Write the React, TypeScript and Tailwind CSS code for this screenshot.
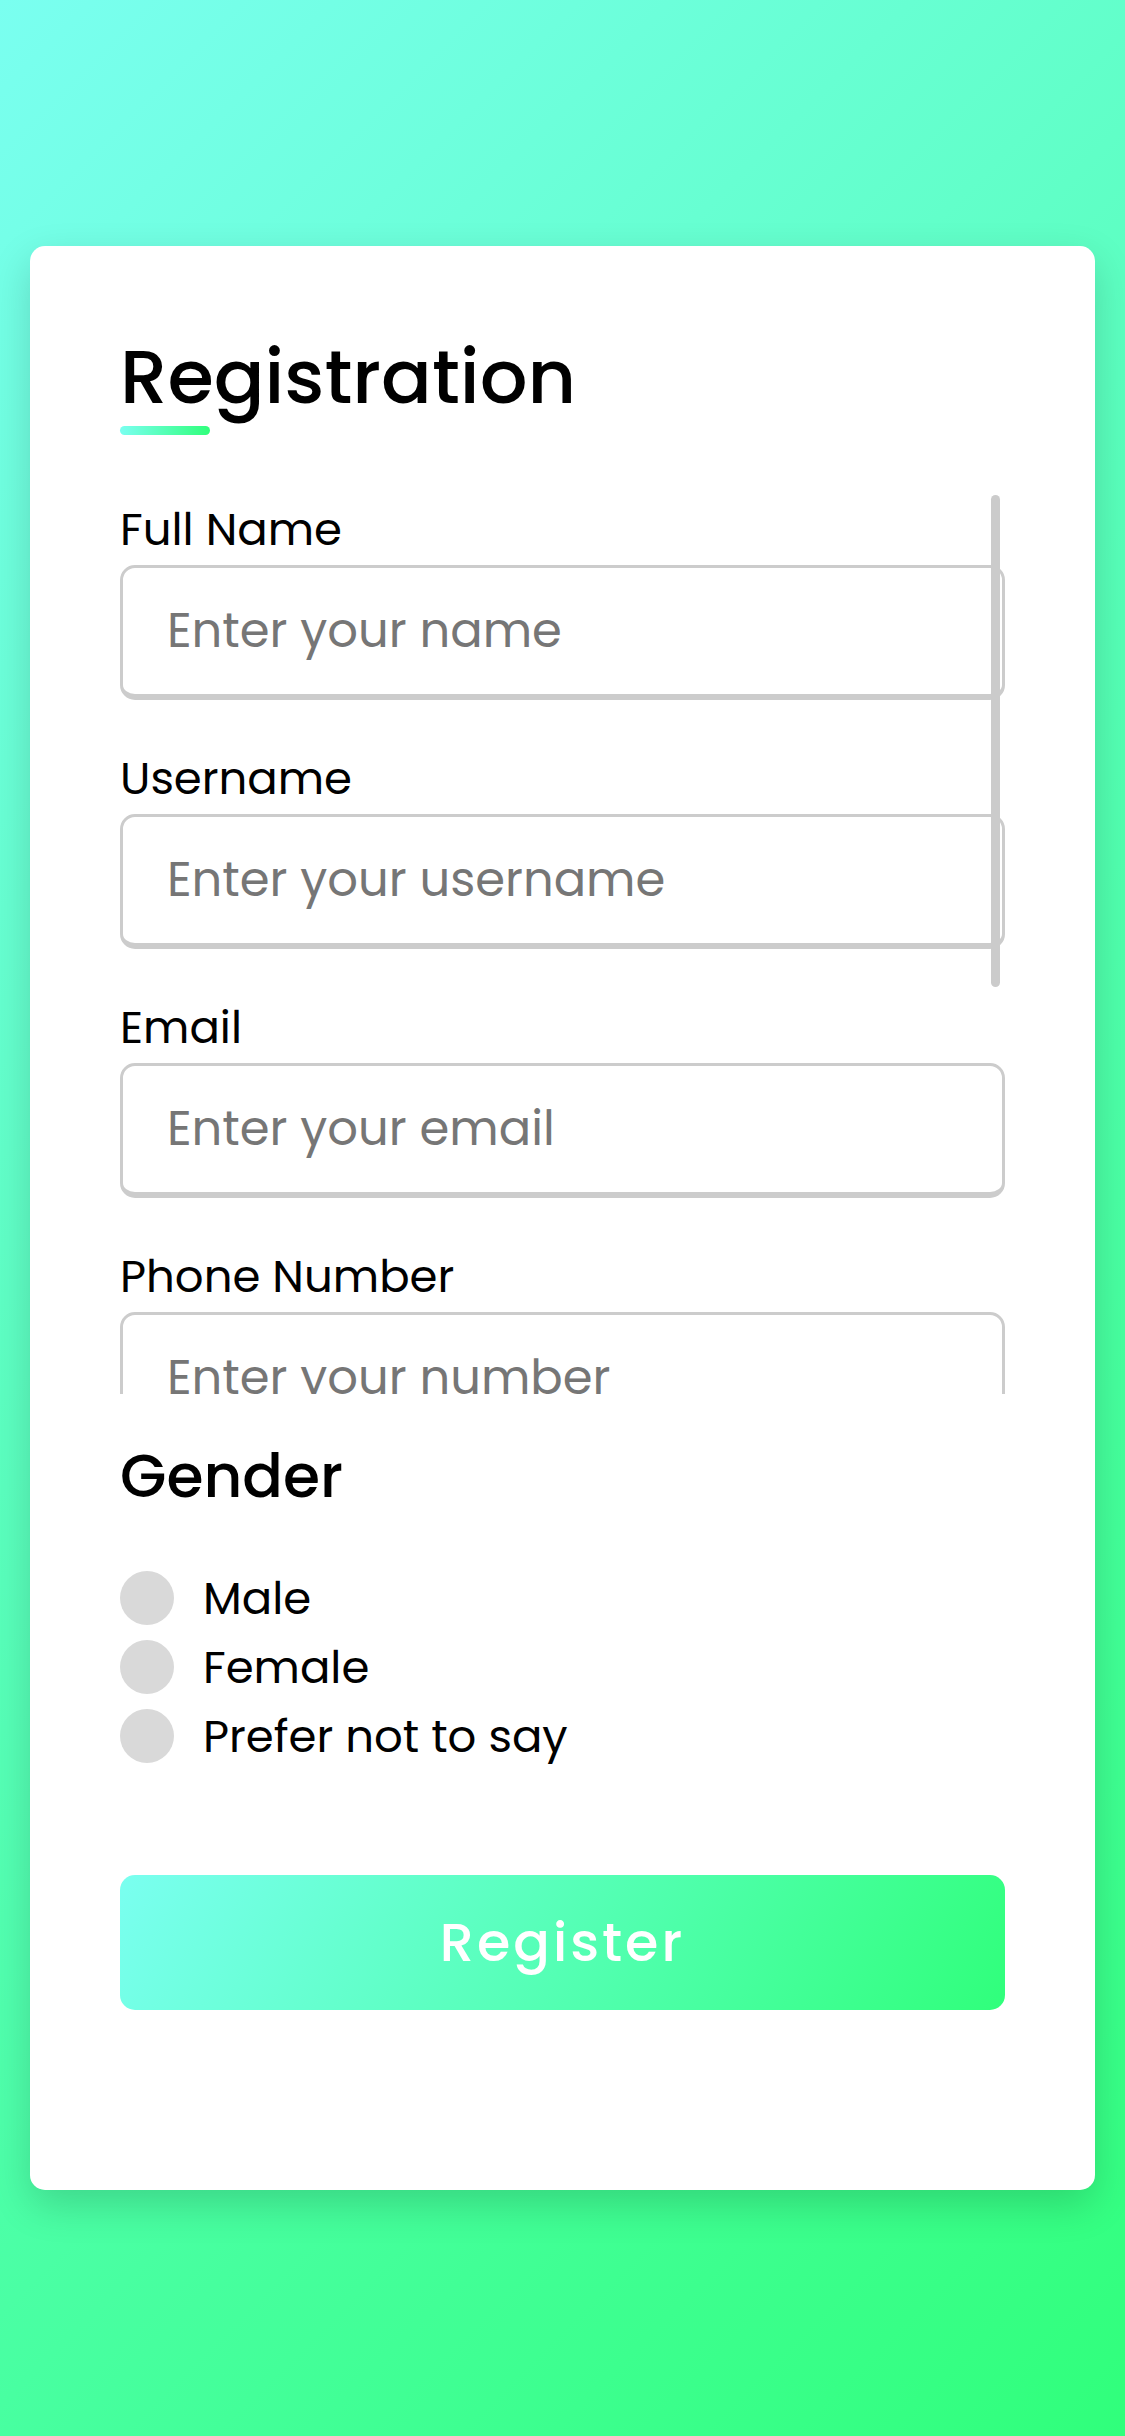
const fields = [
  { label: 'Full Name', placeholder: 'Enter your name' },
  { label: 'Username', placeholder: 'Enter your username' },
  { label: 'Email', placeholder: 'Enter your email' },
  { label: 'Phone Number', placeholder: 'Enter your number' },
];

const genders = ['Male', 'Female', 'Prefer not to say'];

function Field({ label, placeholder }: { label: string; placeholder: string }) {
  return (
    <div className="flex flex-col mb-[52px]">
      <label className="text-[45px] leading-[54px] text-black">{label}</label>
      <input
        type="text"
        placeholder={placeholder}
        className="mt-[8px] h-[135px] w-full shrink-0 rounded-[15px] border-[3px] border-b-[6px] border-[#cccccc] bg-white pl-[44px] text-[48px] text-black outline-none placeholder:text-[#767676]"
      />
    </div>
  );
}

export default function App() {
  return (
    <div className="min-h-screen w-full flex items-center justify-center px-[30px] bg-[linear-gradient(135deg,#7afff0,#30ff7b)] font-['Poppins','Inter',sans-serif]">
      <div className="w-full h-[1944px] bg-white rounded-[15px] shadow-[0_15px_40px_rgba(0,0,0,0.16)] px-[90px] pt-[93px]">
        <h1 className="text-[75px] leading-none font-medium text-black">Registration</h1>
        <div className="mt-[12px] h-[9px] w-[90px] rounded-full bg-[linear-gradient(90deg,#7afff0,#30ff7b)]" />

        <div className="relative mt-[51px]">
          <div className="h-[908px] overflow-hidden pt-[17px]">
            {fields.map((f) => (
              <Field key={f.label} label={f.label} placeholder={f.placeholder} />
            ))}
          </div>
          {/* scroll indicator */}
          <div className="absolute right-[5px] top-[9px] w-[9px] h-[492px] rounded-full bg-[#cbcbcb]" />
        </div>

        <h2 className="mt-[52px] text-[60px] leading-none font-medium text-black">Gender</h2>
        <div className="mt-[65px] flex flex-col gap-[15px]">
          {genders.map((g) => (
            <label key={g} className="flex items-center gap-[29px]">
              <span className="w-[54px] h-[54px] rounded-full bg-[#d9d9d9] shrink-0" />
              <span className="text-[45px] leading-none text-black">{g}</span>
            </label>
          ))}
        </div>

        <button
          type="button"
          className="mt-[112px] w-full h-[135px] rounded-[15px] bg-[linear-gradient(120deg,#7afff0,#30ff7b)] text-white text-[54px] font-medium tracking-[3px]"
        >
          Register
        </button>
      </div>
    </div>
  );
}
